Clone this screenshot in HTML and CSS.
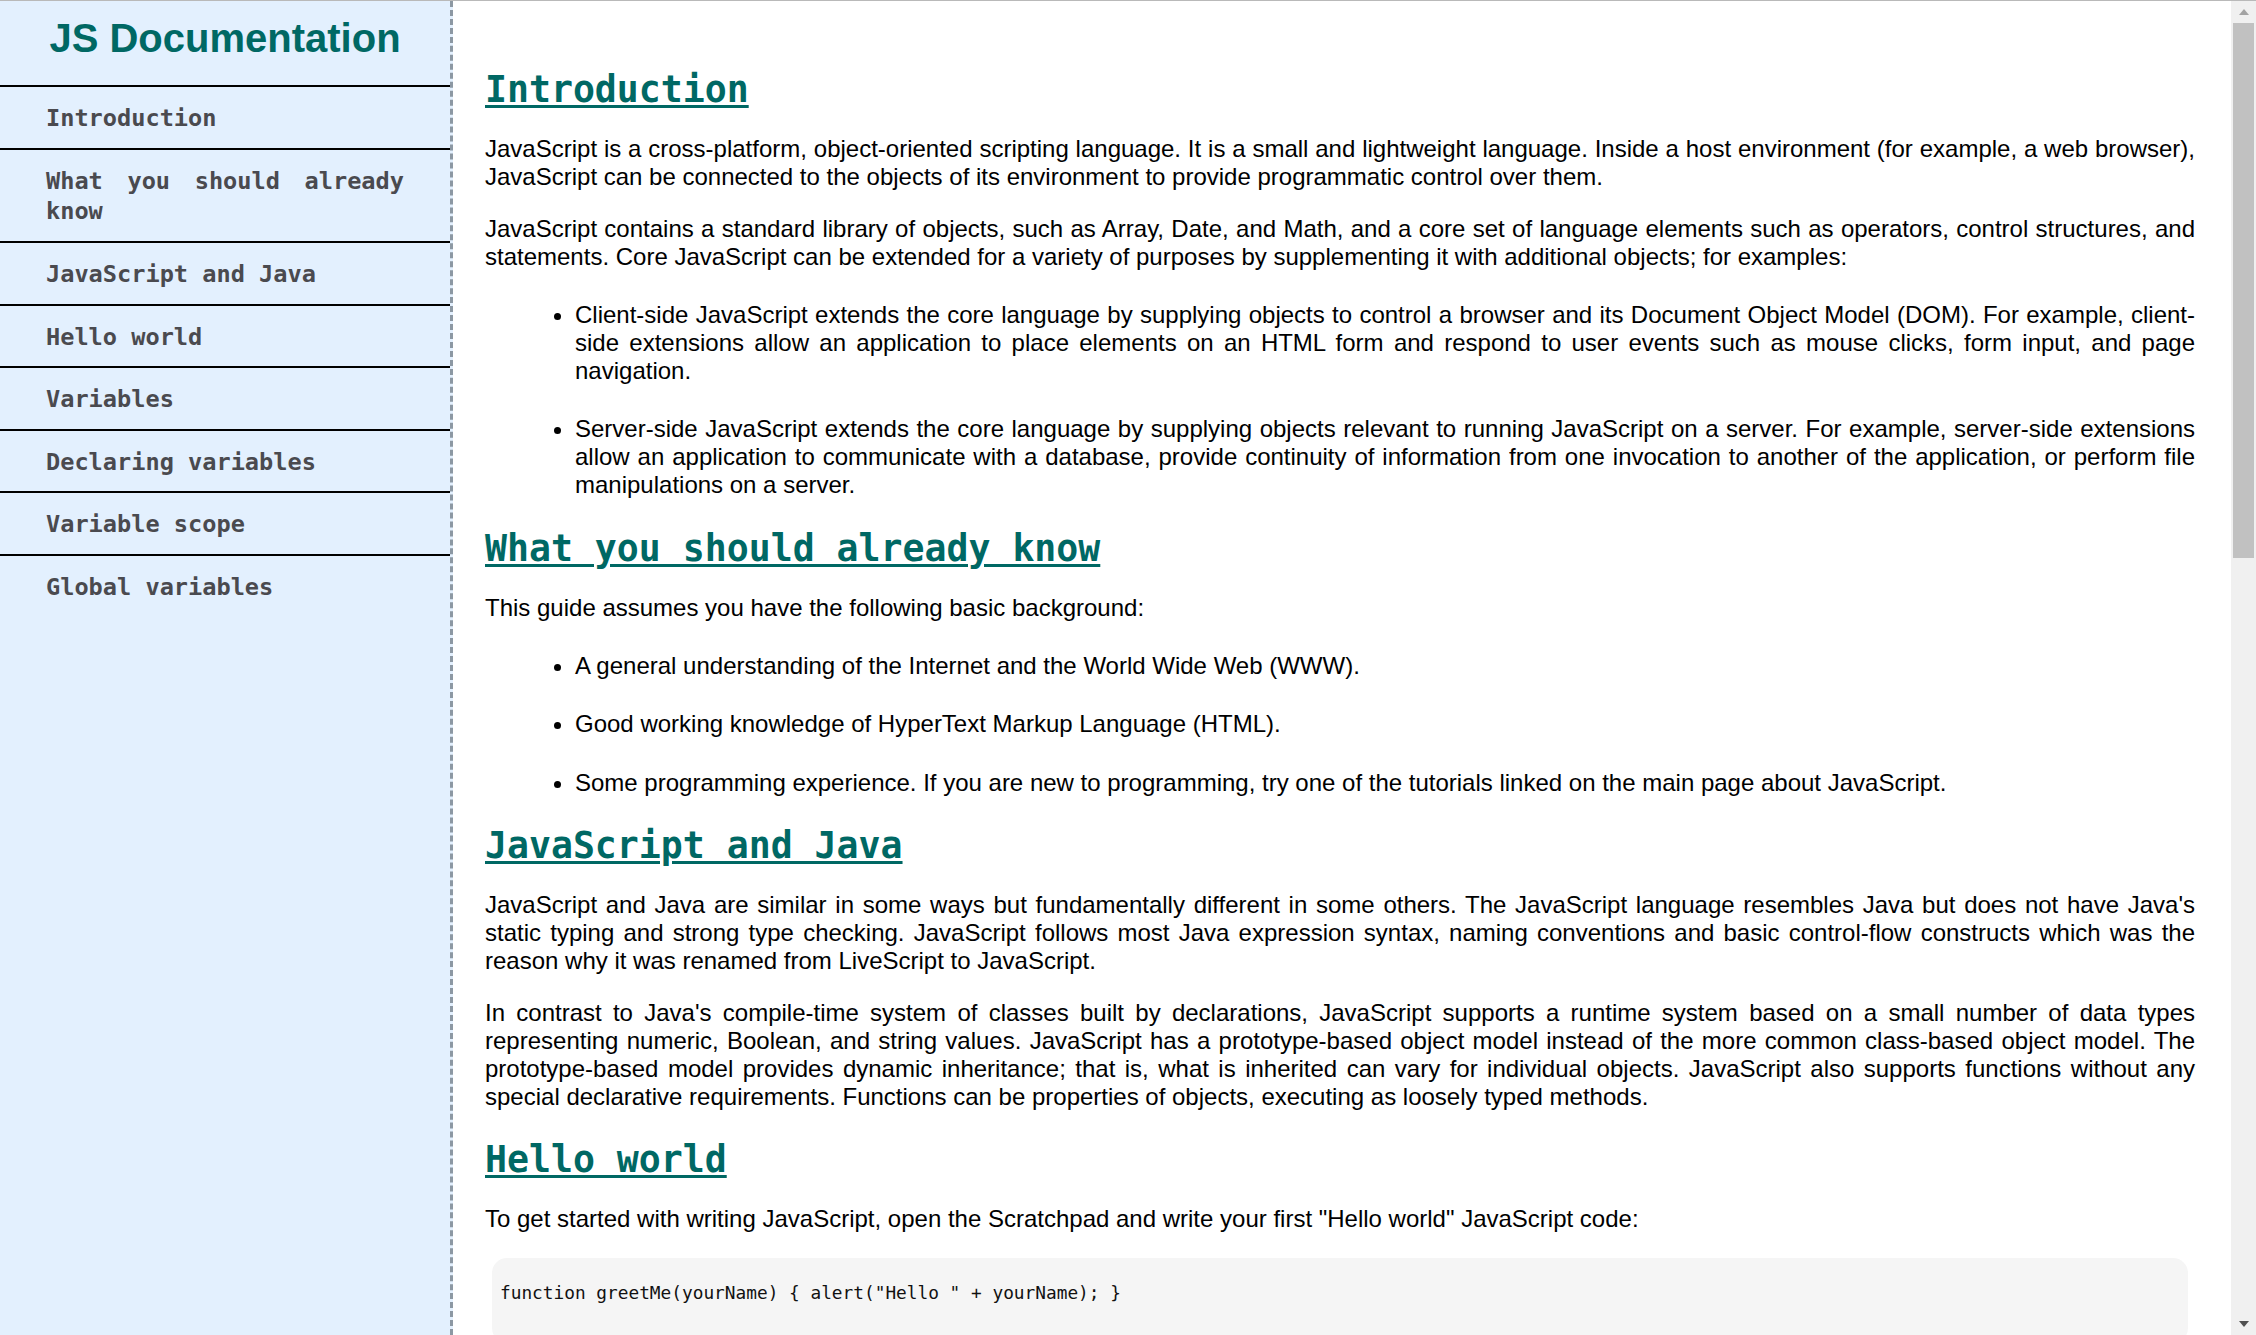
FILE: index.html
```html
<!DOCTYPE html>
<html lang="en">
<head>
<meta charset="utf-8">
<title>JS Documentation</title>
<link rel="stylesheet" href="styles.css">
</head>
<body>
<div class="page">
  <nav class="sidebar" id="navbar">
    <header class="brand">JS Documentation</header>
    <ul class="nav-list">
      <li class="nav-item"><a class="nav-link" href="#Introduction">Introduction</a></li>
      <li class="nav-item"><a class="nav-link" href="#What_you_should_already_know">What you should already know</a></li>
      <li class="nav-item"><a class="nav-link" href="#JavaScript_and_Java">JavaScript and Java</a></li>
      <li class="nav-item"><a class="nav-link" href="#Hello_world">Hello world</a></li>
      <li class="nav-item"><a class="nav-link" href="#Variables">Variables</a></li>
      <li class="nav-item"><a class="nav-link" href="#Declaring_variables">Declaring variables</a></li>
      <li class="nav-item"><a class="nav-link" href="#Variable_scope">Variable scope</a></li>
      <li class="nav-item"><a class="nav-link" href="#Global_variables">Global variables</a></li>
    </ul>
  </nav>

  <main class="content" id="main-doc">
    <section class="section" id="Introduction">
      <h2 class="section-title">Introduction</h2>
      <p class="text">JavaScript is a cross-platform, object-oriented scripting language. It is a small and lightweight language. Inside a host environment (for example, a web browser), JavaScript can be connected to the objects of its environment to provide programmatic control over them.</p>
      <p class="text">JavaScript contains a standard library of objects, such as Array, Date, and Math, and a core set of language elements such as operators, control structures, and statements. Core JavaScript can be extended for a variety of purposes by supplementing it with additional objects; for examples:</p>
      <ul class="bullets">
        <li class="bullet">Client-side JavaScript extends the core language by supplying objects to control a browser and its Document Object Model (DOM). For example, client-side extensions allow an application to place elements on an HTML form and respond to user events such as mouse clicks, form input, and page navigation.</li>
        <li class="bullet">Server-side JavaScript extends the core language by supplying objects relevant to running JavaScript on a server. For example, server-side extensions allow an application to communicate with a database, provide continuity of information from one invocation to another of the application, or perform file manipulations on a server.</li>
      </ul>
    </section>

    <section class="section" id="What_you_should_already_know">
      <h2 class="section-title">What you should already know</h2>
      <p class="text">This guide assumes you have the following basic background:</p>
      <ul class="bullets">
        <li class="bullet">A general understanding of the Internet and the World Wide Web (WWW).</li>
        <li class="bullet">Good working knowledge of HyperText Markup Language (HTML).</li>
        <li class="bullet">Some programming experience. If you are new to programming, try one of the tutorials linked on the main page about JavaScript.</li>
      </ul>
    </section>

    <section class="section" id="JavaScript_and_Java">
      <h2 class="section-title">JavaScript and Java</h2>
      <p class="text">JavaScript and Java are similar in some ways but fundamentally different in some others. The JavaScript language resembles Java but does not have Java's static typing and strong type checking. JavaScript follows most Java expression syntax, naming conventions and basic control-flow constructs which was the reason why it was renamed from LiveScript to JavaScript.</p>
      <p class="text">In contrast to Java's compile-time system of classes built by declarations, JavaScript supports a runtime system based on a small number of data types representing numeric, Boolean, and string values. JavaScript has a prototype-based object model instead of the more common class-based object model. The prototype-based model provides dynamic inheritance; that is, what is inherited can vary for individual objects. JavaScript also supports functions without any special declarative requirements. Functions can be properties of objects, executing as loosely typed methods.</p>
    </section>

    <section class="section" id="Hello_world">
      <h2 class="section-title">Hello world</h2>
      <p class="text">To get started with writing JavaScript, open the Scratchpad and write your first "Hello world" JavaScript code:</p>
      <pre class="code"><code>function greetMe(yourName) { alert("Hello " + yourName); }</code></pre>
    </section>
  </main>

  <div class="scrollbar" aria-hidden="true">
    <div class="sb-button"><span class="arrow-up"></span></div>
    <div class="sb-thumb"></div>
    <div class="sb-track"></div>
    <div class="sb-button"><span class="arrow-down"></span></div>
  </div>
</div>
</body>
</html>
```

FILE: styles.css
```css
* { box-sizing: border-box; }

html, body {
  margin: 0;
  padding: 0;
  height: 100%;
  background: #ffffff;
}

body {
  overflow: hidden;
}

.page {
  display: flex;
  height: 100vh;
  border-top: 1px solid #b9b9b9;
  overflow: hidden;
}

/* ---------- Sidebar ---------- */
.sidebar {
  flex: 0 0 453px;
  width: 453px;
  background: #e3f0fe;
  border-right: 3px dashed #8c98a3;
  display: flex;
  flex-direction: column;
}

.brand {
  font-family: "Liberation Sans", Arial, sans-serif;
  font-weight: bold;
  font-size: 40px;
  line-height: 46px;
  color: #006864;
  text-align: center;
  padding: 14px 0 24px;
}

.nav-list {
  list-style: none;
  margin: 0;
  padding: 0;
}

.nav-item {
  border-top: 2px solid #000000;
  padding: 16px 46px 13.8px;
  text-align: justify;
  font-family: "DejaVu Sans Mono", "Liberation Mono", monospace;
  font-weight: bold;
  font-size: 23.6px;
  line-height: 30.8px;
}

.nav-link {
  color: #4a4a4f;
  text-decoration: none;
}

/* ---------- Main content ---------- */
.content {
  flex: 1 1 auto;
  min-width: 0;
  overflow: hidden;
  padding: 39.5px 36px 0 32px;
  font-family: "Liberation Sans", Arial, sans-serif;
  font-size: 24px;
  line-height: 28px;
  color: #000000;
}

.section-title {
  font-family: "DejaVu Sans Mono", "Liberation Mono", monospace;
  font-weight: bold;
  font-size: 36.5px;
  line-height: 42px;
  color: #006864;
  margin: 28.5px 0 23.8px;
  text-decoration: underline;
  text-decoration-thickness: 3px;
  text-underline-offset: 3px;
}

.text {
  margin: 0 0 24px;
  text-align: justify;
}

.bullets {
  margin: 0 0 24px;
  padding-left: 90px;
}

.bullet {
  margin-top: 30.3px;
  text-align: justify;
}

.code {
  margin: 24.6px 7px 0;
  padding: 25px 8px 40px;
  background: #f5f5f5;
  border-radius: 15px;
  font-family: "DejaVu Sans Mono", "Liberation Mono", monospace;
  font-size: 17.8px;
  line-height: 20px;
  color: #111111;
}

/* ---------- Scrollbar ---------- */
.scrollbar {
  flex: 0 0 25px;
  width: 25px;
  background: #f0f0f0;
  display: flex;
  flex-direction: column;
  align-items: center;
}

.sb-button {
  flex: 0 0 22px;
  width: 25px;
  display: flex;
  align-items: center;
  justify-content: center;
}

.sb-thumb {
  flex: 0 0 535px;
  width: 21px;
  background: #c1c1c1;
}

.sb-track {
  flex: 1 1 auto;
}

.arrow-up {
  width: 0;
  height: 0;
  border-left: 5.5px solid transparent;
  border-right: 5.5px solid transparent;
  border-bottom: 6px solid #a3a3a3;
}

.arrow-down {
  width: 0;
  height: 0;
  border-left: 5.5px solid transparent;
  border-right: 5.5px solid transparent;
  border-top: 6px solid #505050;
}
```
